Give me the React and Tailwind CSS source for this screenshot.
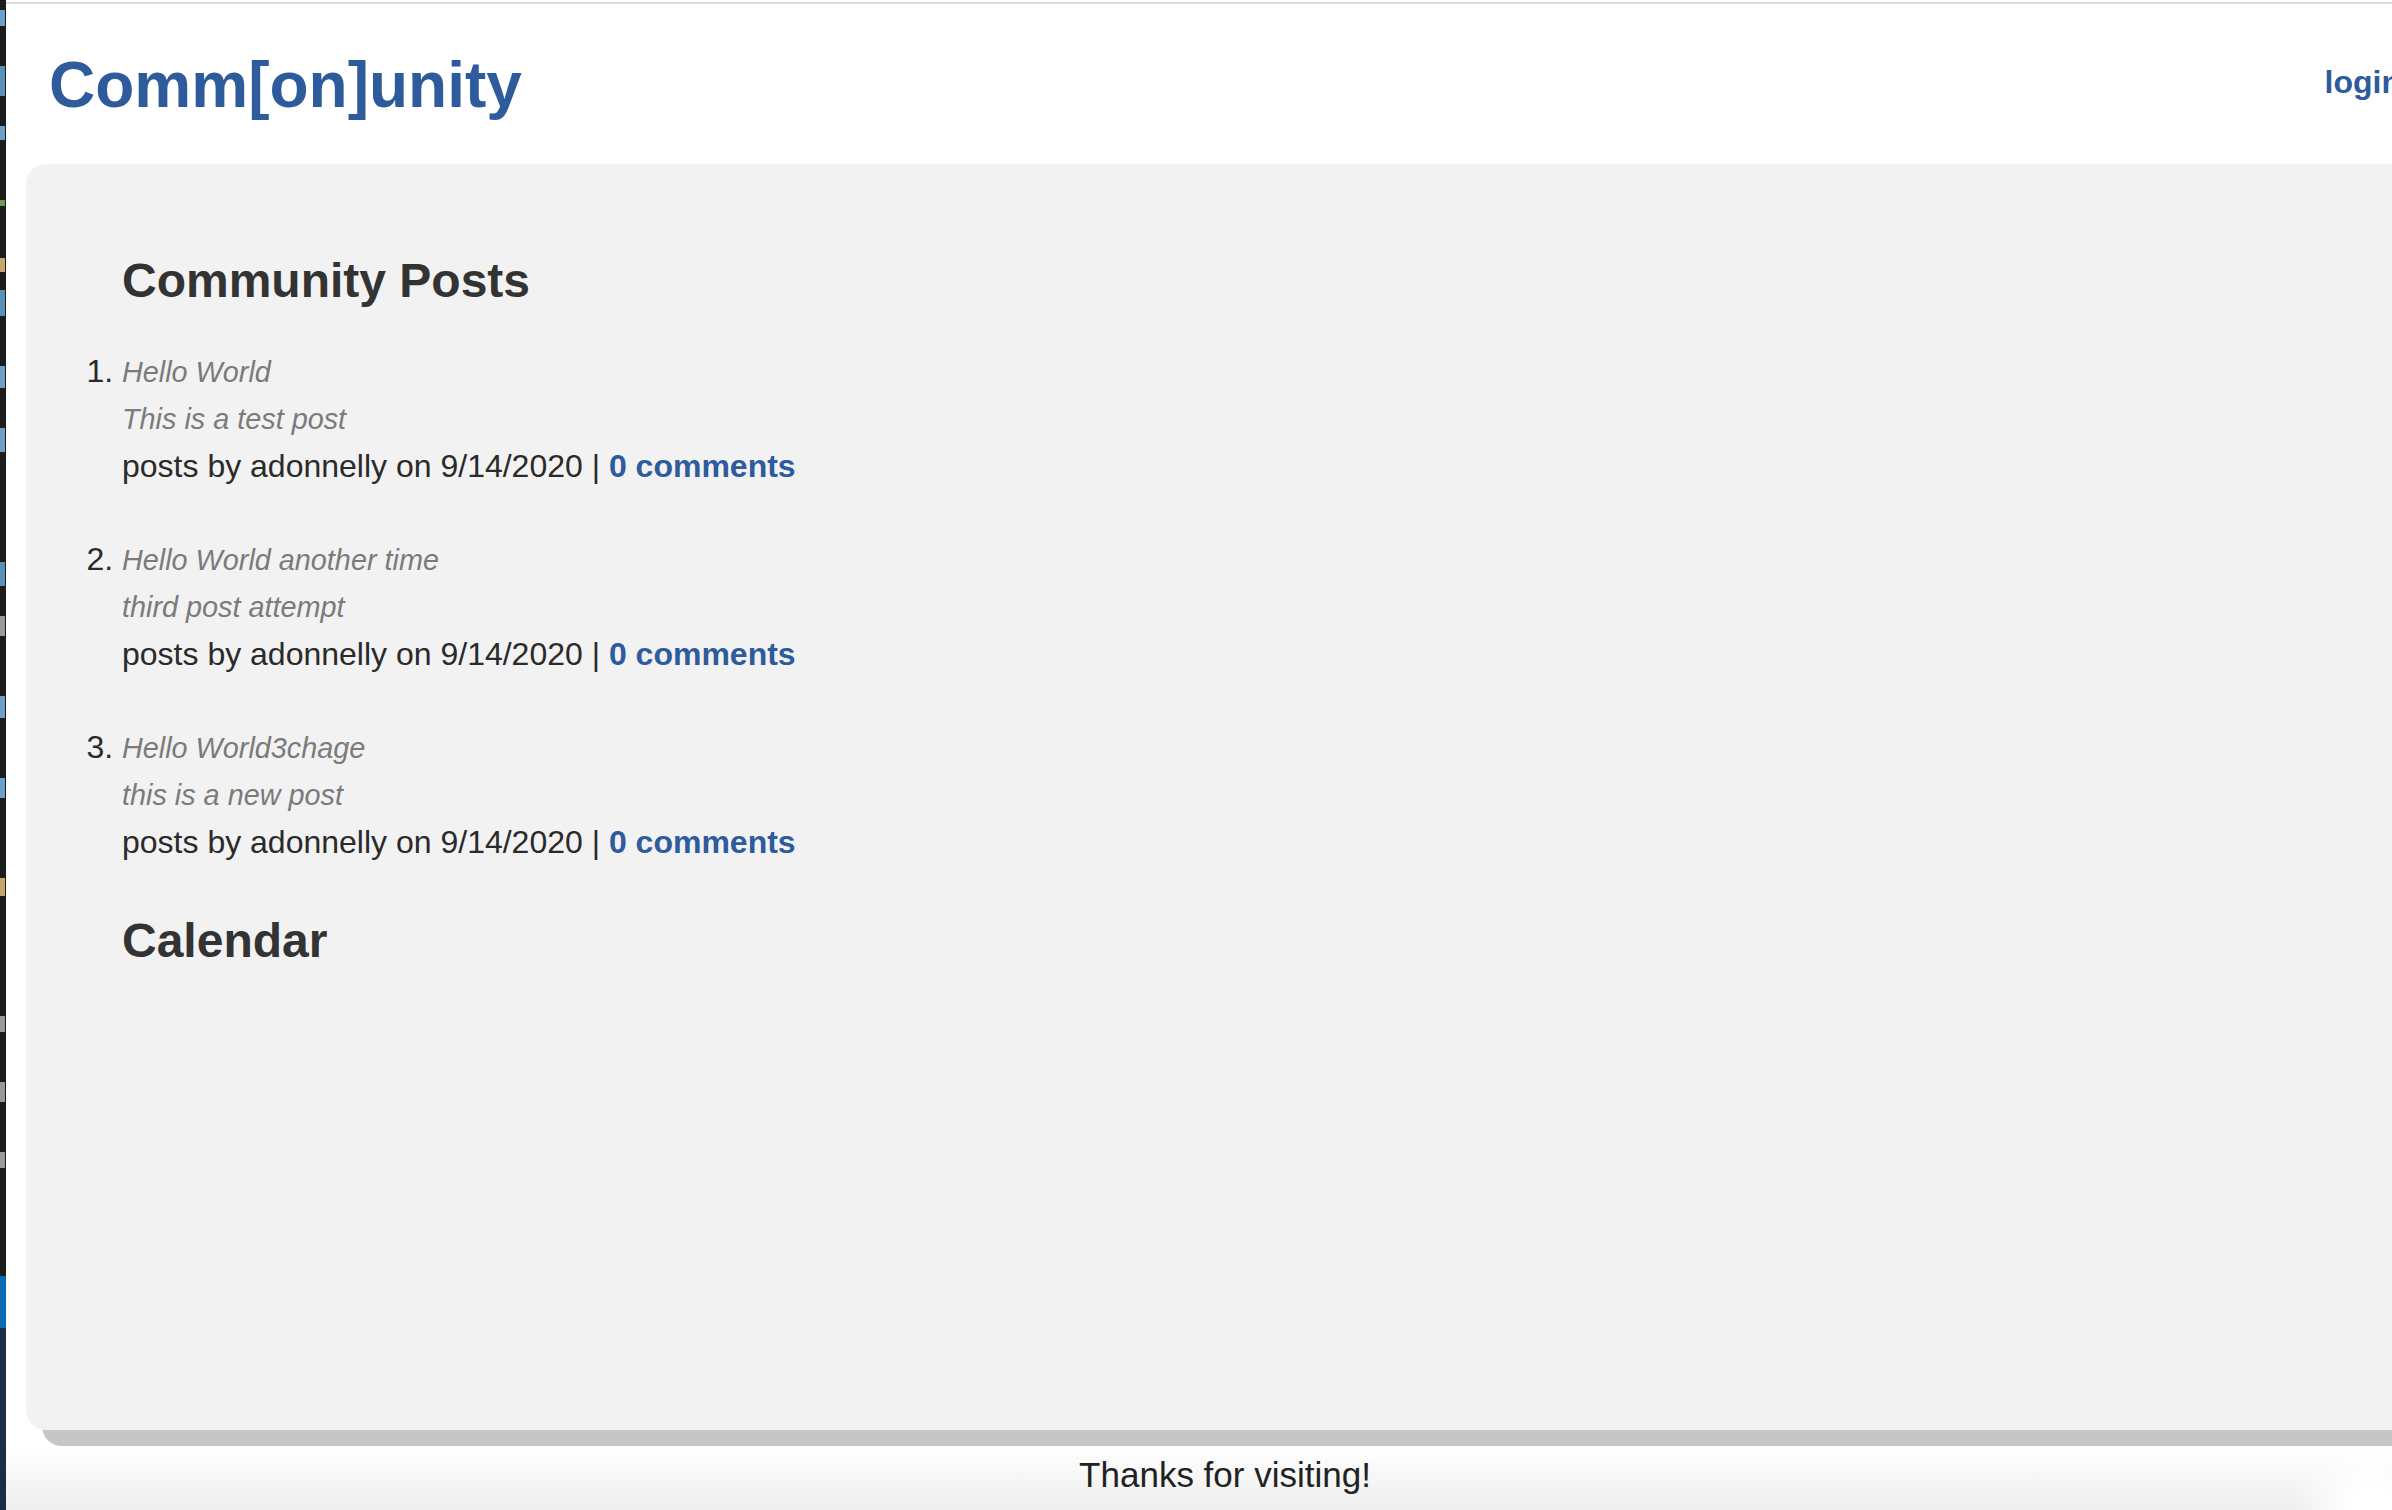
const posts = [
  { title: "Hello World", body: "This is a test post" },
  { title: "Hello World another time", body: "third post attempt" },
  { title: "Hello World3chage", body: "this is a new post" },
];

// bits of the editor window peeking in on the left edge
const stripMarks = [
  { top: 10, h: 16, c: "bg-[#6f9fc4]" },
  { top: 40, h: 30, c: "bg-[#5a8fb8]" },
  { top: 30, h: 14, c: "bg-[#6f9fc4]" },
  { top: 60, h: 6, c: "bg-[#6a9955]" },
  { top: 52, h: 14, c: "bg-[#c8a86a]" },
  { top: 18, h: 26, c: "bg-[#5a8fb8]" },
  { top: 50, h: 22, c: "bg-[#6f9fc4]" },
  { top: 40, h: 24, c: "bg-[#6f9fc4]" },
  { top: 110, h: 24, c: "bg-[#5a8fb8]" },
  { top: 30, h: 20, c: "bg-[#9a9a9a]" },
  { top: 60, h: 22, c: "bg-[#6f9fc4]" },
  { top: 60, h: 20, c: "bg-[#6f9fc4]" },
  { top: 80, h: 18, c: "bg-[#c8a86a]" },
  { top: 120, h: 16, c: "bg-[#9a9a9a]" },
  { top: 50, h: 20, c: "bg-[#9a9a9a]" },
  { top: 50, h: 16, c: "bg-[#9a9a9a]" },
];

function EditorStrip() {
  return (
    <div className="w-[6px] shrink-0 h-full flex flex-col bg-[#1c1c1c]">
      <div className="h-[1276px] flex flex-col">
        {stripMarks.map((m, i) => (
          <div
            key={i}
            className={`w-[5px] shrink-0 ${m.c}`}
            style={{ marginTop: m.top, height: m.h }}
          />
        ))}
      </div>
      <div className="h-[52px] bg-[#0b6bb1]" />
      <div className="flex-1 bg-[#1d2b44]" />
    </div>
  );
}

function PostItem({ post, first }) {
  return (
    <li className={`${first ? "" : "mt-[46px]"} text-[32px] leading-[47px] text-[#2a2a2a]`}>
      <div className="italic text-[28.8px] text-[#7b7b7b]">{post.title}</div>
      <div className="italic text-[28.8px] text-[#7b7b7b]">{post.body}</div>
      <div>
        posts by adonnelly on 9/14/2020 |{" "}
        <a className="font-bold text-[#2d5b9c]">0 comments</a>
      </div>
    </li>
  );
}

export default function App() {
  return (
    <div
      className="flex h-[1510px] w-[2392px] overflow-hidden bg-white"
      style={{ fontFamily: '"Liberation Sans", Arial, Helvetica, sans-serif' }}
    >
      <EditorStrip />
      <div className="w-[2438px] shrink-0 flex flex-col">
        <div className="mt-[2px] h-[2px] bg-[#dcdce0]" />

        <header className="flex justify-between px-[43px] pt-[44px] h-[160px] items-start">
          <h1 className="text-[64px] leading-[74px] font-bold text-[#2d5b9c]">
            Comm[on]unity
          </h1>
          <a className="mt-[16px] text-[32px] leading-[37px] font-bold text-[#2d5b9c]">
            login
          </a>
        </header>

        <main className="mx-[20px] h-[1266px] shrink-0 rounded-[20px] bg-[#f2f2f2] shadow-[16px_16px_0_#c6c6c6] pl-[96px] pt-[88px]">
          <h2 className="text-[48px] leading-[58px] font-bold text-[#333333]">
            Community Posts
          </h2>
          <ol className="mt-[38px] list-decimal list-outside">
            {posts.map((p, i) => (
              <PostItem key={i} post={p} first={i === 0} />
            ))}
          </ol>
          <h2 className="mt-[46px] text-[48px] leading-[58px] font-bold text-[#333333]">
            Calendar
          </h2>
        </main>

        <footer className="mt-[16px] flex-1 pt-[5px] text-center text-[35px] leading-[48px] text-[#222222] bg-[radial-gradient(circle_at_97%_100%,#ffffff_0,#ffffff_20px,transparent_80px),linear-gradient(to_bottom,#ffffff,#eeeeee)]">
          Thanks for visiting!
        </footer>
      </div>
    </div>
  );
}
